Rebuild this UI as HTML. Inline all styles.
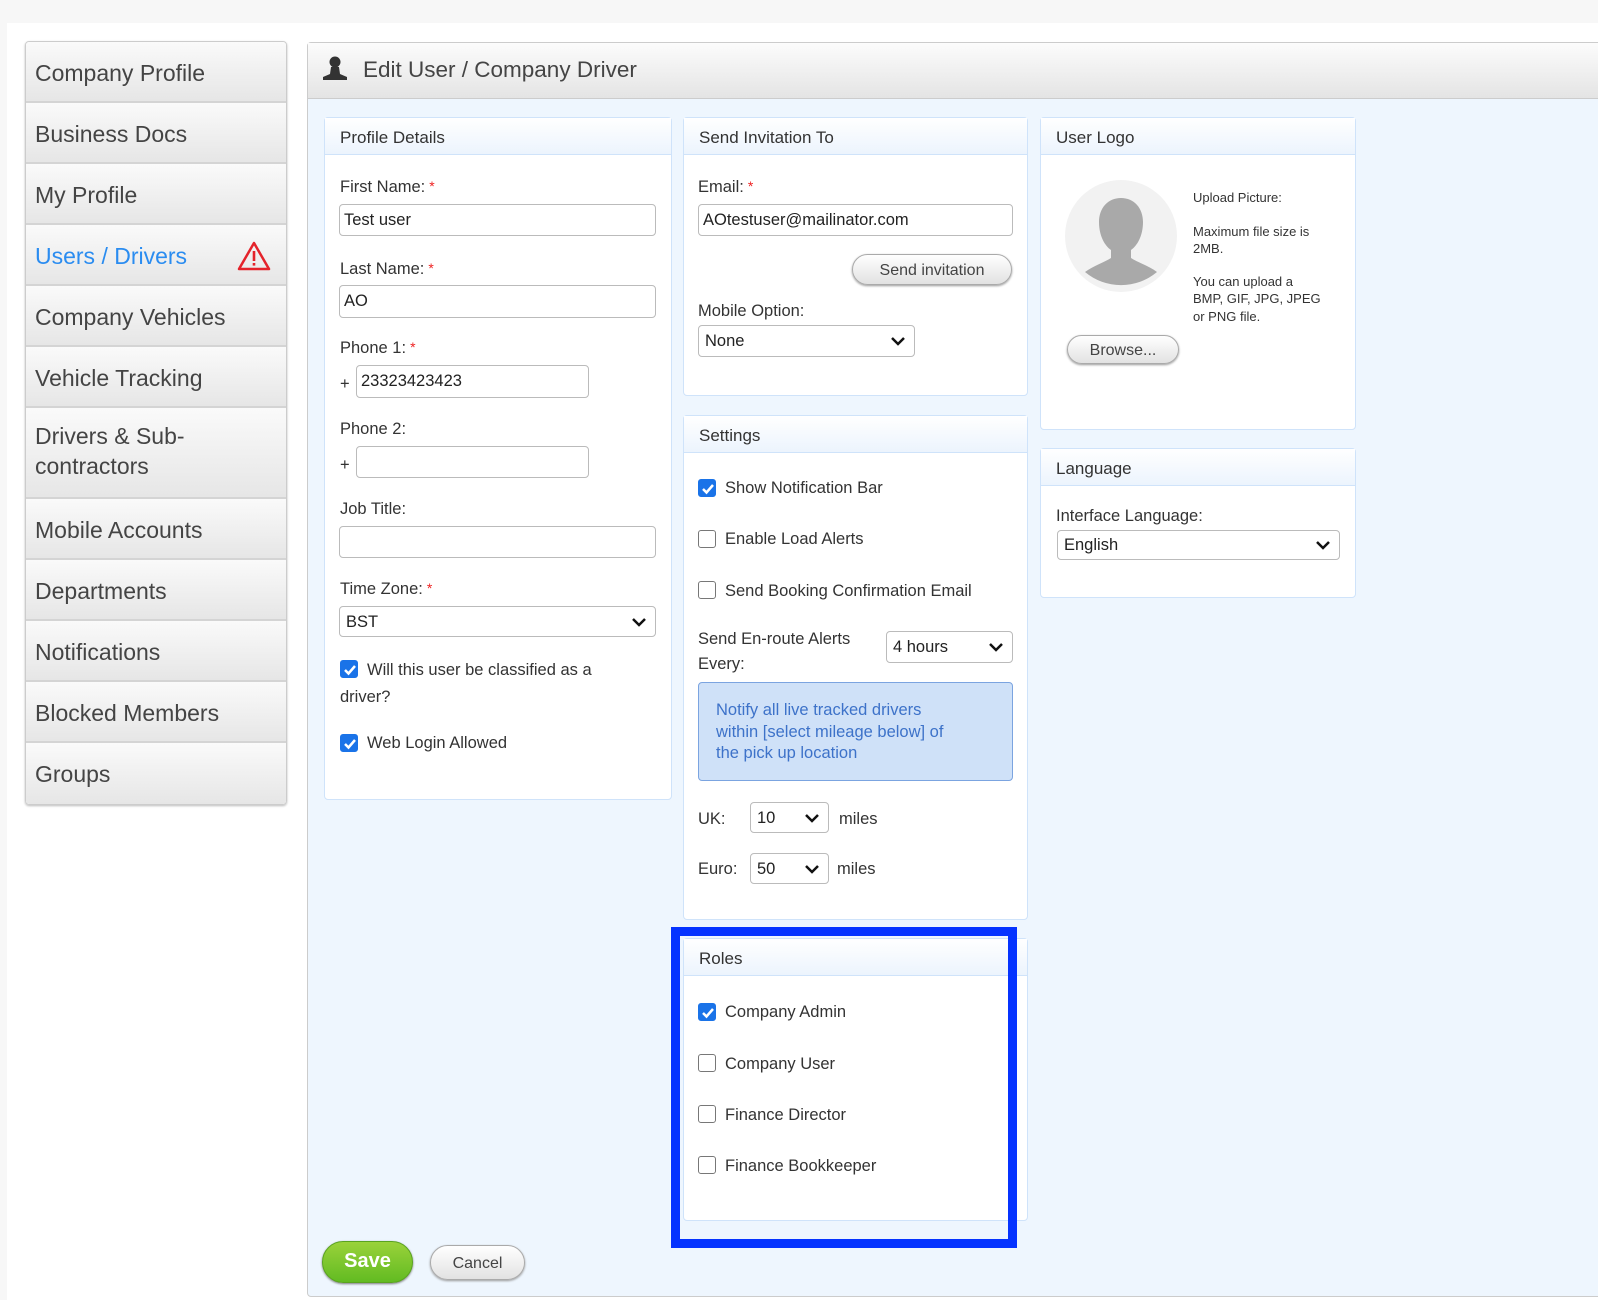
<!DOCTYPE html>
<html><head><meta charset="utf-8"><style>
*{box-sizing:border-box;margin:0;padding:0}
body{width:1598px;height:1300px;position:relative;background:#f7f7f7;font-family:"Liberation Sans",sans-serif;color:#333;overflow:hidden}
.a{position:absolute}
.white{left:7px;top:23px;right:0;bottom:0;background:#fff}
.side{left:25px;top:41px;width:262px;height:764px;border:1px solid #ccc;border-radius:4px;overflow:hidden;box-shadow:0 1px 2px #bbb}
.it{height:61px;border-bottom:2px solid #d4d4d4;background:linear-gradient(#fafafa,#e6e6e6);font-size:23px;color:#444;padding:18px 0 0 9px;position:relative}
.main{left:307px;top:42px;width:1300px;height:1255px;border:1px solid #ccc;border-radius:4px;background:#eef6fe}
.hdr{left:0;top:0;right:0;height:56px;background:linear-gradient(#fcfcfc,#e4e4e4);border-bottom:1px solid #ccc}
.pn{background:#fff;border:1px solid #cfe3fa;border-radius:4px}
.ph{position:absolute;left:0;top:0;right:0;height:37px;background:linear-gradient(#fff,#ecf4fd);border-bottom:1px solid #cfe3fa;font-size:17px;padding:10px 0 0 15px;color:#333}
.lb{font-size:16.5px;color:#333;margin-top:2px}
.st{color:#e22;font-size:14px;vertical-align:top;margin-left:4px}
.in{border:1px solid #bbb;border-radius:4px;background:#fff;font-size:16.5px;padding:6px 4px;color:#222}
.sel{border:1px solid #bbb;border-radius:4px;background:#fff;font-size:16.5px;padding:6px 6px;color:#222}
.sel svg{position:absolute;right:8px;top:50%;margin-top:-5px}
.cb{width:18px;height:18px;border:1.5px solid #777;border-radius:3px;background:#fff}
.cb.on{background:#1a73e8;border-color:#1a73e8}
.btn{border:1px solid #aaa;border-radius:16px;background:linear-gradient(#fff,#e2e2e2);box-shadow:0 1px 2px #999;font-size:16px;color:#444;text-align:center}
</style></head><body>
<div class="a white"></div>
<div class="a side">
<div class="it">Company Profile</div>
<div class="it">Business Docs</div>
<div class="it">My Profile</div>
<div class="it" style="color:#2a8cf0">Users / Drivers
<svg class="a" style="left:211px;top:16px" width="34" height="30" viewBox="0 0 34 30"><path d="M17 2 L32 28 L2 28 Z" fill="none" stroke="#e4232b" stroke-width="2.5" stroke-linejoin="round"/><rect x="15.7" y="10" width="2.6" height="10" fill="#e4232b"/><rect x="15.7" y="22" width="2.6" height="2.6" fill="#e4232b"/></svg></div>
<div class="it">Company Vehicles</div>
<div class="it">Vehicle Tracking</div>
<div class="it" style="height:91px;line-height:30px;padding-top:13px">Drivers &amp; Sub-<br>contractors</div>
<div class="it">Mobile Accounts</div>
<div class="it">Departments</div>
<div class="it">Notifications</div>
<div class="it">Blocked Members</div>
<div class="it" style="border-bottom:none">Groups</div>
</div>

<div class="a main">
<div class="a hdr">
<svg class="a" style="left:14px;top:12px" width="26" height="26" viewBox="0 0 26 26"><circle cx="13" cy="7" r="5.5" fill="#333"/><path d="M9 12 L17 12 L18 19 L25 22 L25 25 L1 25 L1 22 L8 19 Z" fill="#333"/></svg>
<div class="a" style="left:55px;top:14px;font-size:22.5px;color:#444">Edit User / Company Driver</div>
</div>
</div>

<!-- Profile details -->
<div class="a pn" style="left:324px;top:117px;width:348px;height:683px">
<div class="ph">Profile Details</div>
</div>
<div class="a lb" style="left:340px;top:176px">First Name:<span class="st">*</span></div>
<div class="a in" style="left:339px;top:204px;width:317px;height:32px">Test user</div>
<div class="a lb" style="left:340px;top:258px">Last Name:<span class="st">*</span></div>
<div class="a in" style="left:339px;top:285px;width:317px;height:33px">AO</div>
<div class="a lb" style="left:340px;top:337px">Phone 1:<span class="st">*</span></div>
<div class="a lb" style="left:340px;top:373px">+</div>
<div class="a in" style="left:356px;top:365px;width:233px;height:33px">23323423423</div>
<div class="a lb" style="left:340px;top:418px">Phone 2:</div>
<div class="a lb" style="left:340px;top:454px">+</div>
<div class="a in" style="left:356px;top:446px;width:233px;height:32px"></div>
<div class="a lb" style="left:340px;top:498px">Job Title:</div>
<div class="a in" style="left:339px;top:526px;width:317px;height:32px"></div>
<div class="a lb" style="left:340px;top:578px">Time Zone:<span class="st">*</span></div>
<div class="a sel" style="left:339px;top:606px;width:317px;height:31px">BST<svg width="16" height="10"><path d="M2 2 L8 8 L14 2" fill="none" stroke="#111" stroke-width="2.5"/></svg></div>
<div class="a cb on" style="left:340px;top:660px"><svg width="18" height="18"><path d="M4 9 L7.5 12.5 L14 5" fill="none" stroke="#fff" stroke-width="2.5"/></svg></div>
<div class="a lb" style="left:367px;top:659px">Will this user be classified as a</div>
<div class="a lb" style="left:340px;top:686px">driver?</div>
<div class="a cb on" style="left:340px;top:734px"><svg width="18" height="18"><path d="M4 9 L7.5 12.5 L14 5" fill="none" stroke="#fff" stroke-width="2.5"/></svg></div>
<div class="a lb" style="left:367px;top:732px">Web Login Allowed</div>

<!-- Send invitation -->
<div class="a pn" style="left:683px;top:117px;width:345px;height:279px">
<div class="ph">Send Invitation To</div>
</div>
<div class="a lb" style="left:698px;top:176px">Email:<span class="st">*</span></div>
<div class="a in" style="left:698px;top:204px;width:315px;height:32px">AOtestuser@mailinator.com</div>
<div class="a btn" style="left:852px;top:254px;width:160px;height:31px;padding-top:7px">Send invitation</div>
<div class="a lb" style="left:698px;top:300px">Mobile Option:</div>
<div class="a sel" style="left:698px;top:325px;width:217px;height:32px">None<svg width="16" height="10"><path d="M2 2 L8 8 L14 2" fill="none" stroke="#111" stroke-width="2.5"/></svg></div>

<!-- Settings -->
<div class="a pn" style="left:683px;top:415px;width:345px;height:505px">
<div class="ph">Settings</div>
</div>
<div class="a cb on" style="left:698px;top:479px"><svg width="18" height="18"><path d="M4 9 L7.5 12.5 L14 5" fill="none" stroke="#fff" stroke-width="2.5"/></svg></div>
<div class="a lb" style="left:725px;top:477px">Show Notification Bar</div>
<div class="a cb" style="left:698px;top:530px"></div>
<div class="a lb" style="left:725px;top:528px">Enable Load Alerts</div>
<div class="a cb" style="left:698px;top:581px"></div>
<div class="a lb" style="left:725px;top:580px">Send Booking Confirmation Email</div>
<div class="a lb" style="left:698px;top:625px;line-height:25px">Send En-route Alerts<br>Every:</div>
<div class="a sel" style="left:886px;top:631px;width:127px;height:32px">4 hours<svg width="16" height="10"><path d="M2 2 L8 8 L14 2" fill="none" stroke="#111" stroke-width="2.5"/></svg></div>
<div class="a" style="left:698px;top:682px;width:315px;height:99px;background:#cfe1f8;border:1.5px solid #7ba4e0;border-radius:4px;color:#3d72c9;font-size:16.5px;line-height:21.5px;padding:17px 0 0 17px">Notify all live tracked drivers<br>within [select mileage below] of<br>the pick up location</div>
<div class="a lb" style="left:698px;top:808px">UK:</div>
<div class="a sel" style="left:750px;top:802px;width:79px;height:31px">10<svg width="16" height="10"><path d="M2 2 L8 8 L14 2" fill="none" stroke="#111" stroke-width="2.5"/></svg></div>
<div class="a lb" style="left:839px;top:808px">miles</div>
<div class="a lb" style="left:698px;top:858px">Euro:</div>
<div class="a sel" style="left:750px;top:853px;width:79px;height:31px">50<svg width="16" height="10"><path d="M2 2 L8 8 L14 2" fill="none" stroke="#111" stroke-width="2.5"/></svg></div>
<div class="a lb" style="left:837px;top:858px">miles</div>

<!-- Roles -->
<div class="a pn" style="left:683px;top:938px;width:345px;height:283px">
<div class="ph">Roles</div>
</div>
<div class="a cb on" style="left:698px;top:1003px"><svg width="18" height="18"><path d="M4 9 L7.5 12.5 L14 5" fill="none" stroke="#fff" stroke-width="2.5"/></svg></div>
<div class="a lb" style="left:725px;top:1001px">Company Admin</div>
<div class="a cb" style="left:698px;top:1054px"></div>
<div class="a lb" style="left:725px;top:1053px">Company User</div>
<div class="a cb" style="left:698px;top:1105px"></div>
<div class="a lb" style="left:725px;top:1104px">Finance Director</div>
<div class="a cb" style="left:698px;top:1156px"></div>
<div class="a lb" style="left:725px;top:1155px">Finance Bookkeeper</div>
<div class="a" style="left:671px;top:927px;width:346px;height:321px;border:9px solid #0533ff"></div>

<!-- User Logo -->
<div class="a pn" style="left:1040px;top:117px;width:316px;height:313px">
<div class="ph">User Logo</div>
</div>
<svg class="a" style="left:1065px;top:180px" width="112" height="112" viewBox="0 0 112 112"><circle cx="56" cy="56" r="56" fill="#f2f2f2"/><path d="M56 18 C43 18 34 28 34 42 C34 56 40 66 46 70 L46 78 C40 82 28 86 20 92 A56 56 0 0 0 92 92 C84 86 72 82 66 78 L66 70 C72 66 78 56 78 42 C78 28 69 18 56 18 Z" fill="#a9a9a9"/></svg>
<div class="a" style="left:1193px;top:189px;font-size:13px;color:#333;line-height:17.5px">Upload Picture:<br><div style="height:16px"></div>Maximum file size is<br>2MB.<br><div style="height:15px"></div>You can upload a<br>BMP, GIF, JPG, JPEG<br>or PNG file.</div>
<div class="a btn" style="left:1067px;top:335px;width:112px;height:29px;padding-top:6px">Browse...</div>

<!-- Language -->
<div class="a pn" style="left:1040px;top:448px;width:316px;height:150px">
<div class="ph">Language</div>
</div>
<div class="a lb" style="left:1056px;top:505px">Interface Language:</div>
<div class="a sel" style="left:1057px;top:530px;width:283px;height:30px;padding-top:5px">English<svg width="16" height="10"><path d="M2 2 L8 8 L14 2" fill="none" stroke="#111" stroke-width="2.5"/></svg></div>

<!-- Buttons -->
<div class="a" style="left:322px;top:1241px;width:91px;height:42px;border-radius:21px;background:linear-gradient(#9ad23a,#62bb22);border:1px solid #5aa320;box-shadow:0 1px 2px #777;color:#fff;font-weight:bold;font-size:20px;text-align:center;padding-top:8px">Save</div>
<div class="a btn" style="left:430px;top:1245px;width:95px;height:35px;padding-top:9px;border-radius:18px">Cancel</div>
</body></html>
